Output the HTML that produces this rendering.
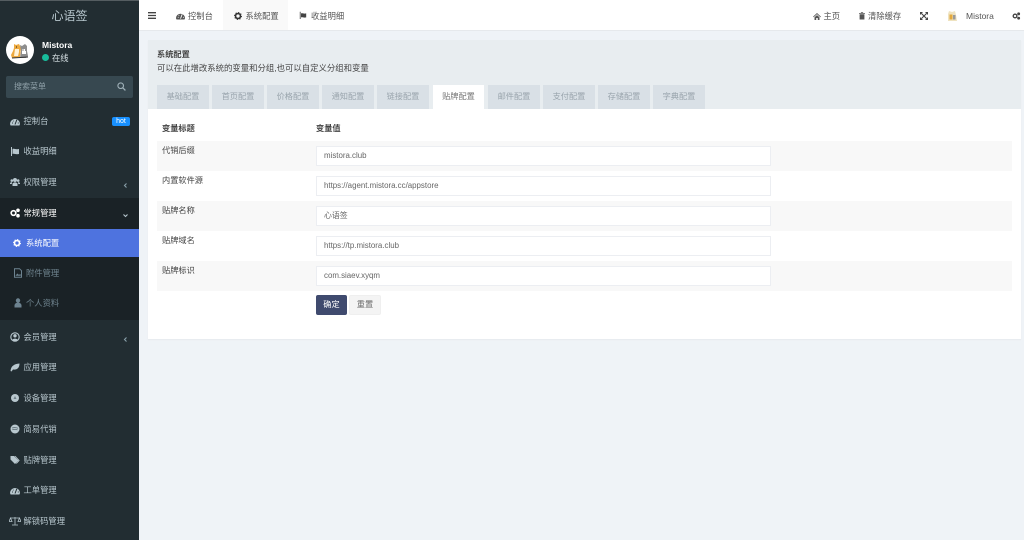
<!DOCTYPE html>
<html lang="zh"><head><meta charset="utf-8"><title>系统配置</title>
<style>
*{box-sizing:border-box}
html,body{margin:0;padding:0;width:1024px;height:540px;overflow:hidden;background:#eff3f7;font-family:"Liberation Sans","Noto Sans CJK SC",sans-serif;font-size:8.2px;color:#444}
#wrap{position:absolute;left:0;top:0;width:1024px;height:540px;overflow:hidden;filter:blur(.3px)}
.a{position:absolute;white-space:nowrap}
#side{position:absolute;left:0;top:0;width:139px;height:540px;background:#222d32}
.mi{position:absolute;left:23.5px;color:#b8c7ce;font-size:8.3px;line-height:12px;white-space:nowrap}
.ic{position:absolute;left:10px;width:10px;height:10px;fill:#b8c7ce}
.ch{position:absolute;left:122px;width:7px;height:7px;fill:none;stroke:#8aa0aa;stroke-width:1.1}
.tab{position:absolute;top:85px;width:52px;height:24px;background:#d9e0e6;color:#9aa5ad;text-align:center;line-height:24px;font-size:8.2px}
.row{position:absolute;left:157px;width:855px;height:30px}
.g{background:#f8f8f8}
.lb{position:absolute;left:162px;font-size:8.2px;line-height:12px;color:#444}
.inp{position:absolute;left:316px;width:455px;height:20px;background:#fff;border:1px solid #eceef2;color:#666;font-size:7.9px;line-height:18px;padding-left:7px;white-space:nowrap}
.top{position:absolute;font-size:8.3px;line-height:12px;color:#555;white-space:nowrap}
svg{display:block;position:absolute}
</style></head><body>
<div id="wrap">

<div id="side"></div>
<div class="a" style="left:0;top:0;width:139px;height:1px;background:#555d61"></div>
<div class="a" style="left:0;width:139px;top:8px;text-align:center;font-size:12px;line-height:16px;color:#b8c7ce">心语签</div>

<svg style="left:6px;top:36px" width="28" height="28" viewBox="0 0 28 28">
<circle cx="14" cy="14" r="14" fill="#fff"/>
<path d="M8 8l2 1 3-1 2 4-1 9-8 1-1-3 2-4 1-3z" fill="#eda93f"/>
<path d="M9 13h4v3l-1 4H8z" fill="#fff3d8"/>
<path d="M14 9l2 1 3-2 2 2 0 5 1 5-2 2-6 0 1-7z" fill="#8e8e8e"/>
<path d="M16 13h4v5h-4z" fill="#fff"/>
<path d="M6 22l16-1" stroke="#333" stroke-width="1"/>
<path d="M10 11h1M16.500 14h1M19 14h1" stroke="#222" stroke-width="1"/>
</svg>
<div class="a" style="left:42px;top:38.500px;color:#fff;font-weight:bold;font-size:8.500px;line-height:12px">Mistora</div>
<div class="a" style="left:42px;top:54px;width:7px;height:7px;border-radius:50%;background:#18bc9c"></div>
<div class="a" style="left:52px;top:52px;color:#d8e2e6;font-size:8.300px;line-height:12px">在线</div>

<div class="a" style="left:6px;top:76px;width:127px;height:22px;background:#374850;border-radius:2px"></div>
<div class="a" style="left:14px;top:81px;color:#8fa0a8;font-size:8px;line-height:12px">搜索菜单</div>
<svg style="left:117px;top:82px" width="9" height="9" viewBox="0 0 9 9"><circle cx="3.700" cy="3.700" r="2.800" fill="none" stroke="#9fb0b8" stroke-width="1.100"/><path d="M5.800 5.800L8.400 8.400" stroke="#9fb0b8" stroke-width="1.300"/></svg>

<div class="a" style="left:0;top:198px;width:139px;height:122px;background:#1a2226"></div>
<div class="a" style="left:0;top:229px;width:139px;height:28px;background:#4e73df"></div>

<svg class="ic" style="top:116px" viewBox="0 0 10 10"><path d="M0 8a5 5 0 0 1 10 0l-.6 1.500H.6z"/><path d="M5 8.500L6.800 3.800M2 7h.9M7.800 7h.9M3 4.800l.5.500" stroke="#222d32" stroke-width="1" fill="none"/></svg>
<div class="mi" style="top:115px">控制台</div>
<div class="a" style="left:112px;top:117px;width:18px;height:9px;background:#1890ff;border-radius:2px;color:#fff;font-size:7px;line-height:9px;text-align:center">hot</div>

<svg class="ic" style="top:146px" viewBox="0 0 10 10"><path d="M1 1h1v9H1zM2.500 3c2-.8 3 .8 6.500 0v5c-3.500.8-4.500-.8-6.500 0z"/></svg>
<div class="mi" style="top:145px">收益明细</div>

<svg class="ic" style="top:177px" viewBox="0 0 10 10"><circle cx="5" cy="3" r="2"/><circle cx="1.800" cy="3.600" r="1.300"/><circle cx="8.200" cy="3.600" r="1.300"/><path d="M2.500 9V6.500Q5 4 7.500 6.500V9zM0 7V6q1-1 2-.8L1.800 7zM10 7V6q-1-1-2-.8L8.200 7z"/></svg>
<div class="mi" style="top:176px">权限管理</div>
<svg class="ch" style="top:182px" viewBox="0 0 7 7"><path d="M4.500 1.500L2.500 3.500L4.500 5.500"/></svg>

<svg class="ic" style="top:208px" viewBox="0 0 10 10"><circle cx="3.500" cy="5" r="2.300" fill="none" stroke="#fff" stroke-width="1.700"/><circle cx="8" cy="2.300" r="1.800" fill="#fff"/><circle cx="8" cy="7.700" r="1.800" fill="#fff"/></svg>
<div class="mi" style="top:207px;color:#fff">常规管理</div>
<svg class="ch" style="top:212px;stroke:#b8c7ce" viewBox="0 0 7 7"><path d="M1.500 2.500L3.500 4.500L5.500 2.500"/></svg>

<svg class="ic" style="left:13px;top:238.500px;width:8px;height:8px" viewBox="0 0 10 10"><circle cx="5" cy="5" r="3.100" fill="none" stroke="#fff" stroke-width="2"/><circle cx="5" cy="5" r="4.400" fill="none" stroke="#fff" stroke-width="1.200" stroke-dasharray="1.500 1.955"/></svg>
<div class="mi" style="left:26px;top:237px;color:#fff">系统配置</div>

<svg class="ic" style="left:13px;top:268px;fill:none;stroke:#6d8390" viewBox="0 0 10 10"><path d="M1.500 .7h5l2 2v6.600h-7z"/><path d="M2.500 7.500l2-2 1.500 1.500 1-1 .8.800v1h-5z" fill="#6d8390" stroke="none"/></svg>
<div class="mi" style="left:26px;top:267px;color:#6f848f">附件管理</div>

<svg class="ic" style="left:13px;top:298px;fill:#6d8390" viewBox="0 0 10 10"><circle cx="5" cy="2.500" r="2.200"/><path d="M1.500 9.500V7q1-2.500 3.500-2.500T8.500 7v2.500z"/></svg>
<div class="mi" style="left:26px;top:297px;color:#6f848f">个人资料</div>

<svg class="ic" style="top:332px" viewBox="0 0 10 10"><circle cx="5" cy="5" r="4.200" fill="none" stroke="#b8c7ce" stroke-width="1.100"/><circle cx="5" cy="3.800" r="1.700"/><path d="M2.300 8a3 2.500 0 0 1 5.400 0L5 9.500z"/></svg>
<div class="mi" style="top:331px">会员管理</div>
<svg class="ch" style="top:336px" viewBox="0 0 7 7"><path d="M4.500 1.500L2.500 3.500L4.500 5.500"/></svg>

<svg class="ic" style="top:362px" viewBox="0 0 10 10"><path d="M.5 9C1 4 4 2 9.500 1.500 9.500 6 7 8 3 7.500L1.500 9.500z"/></svg>
<div class="mi" style="top:361px">应用管理</div>

<svg class="ic" style="top:393px" viewBox="0 0 10 10"><circle cx="5" cy="5" r="4"/><path d="M5 3l1.500 3h-3z" fill="#6f7f87"/></svg>
<div class="mi" style="top:392px">设备管理</div>

<svg class="ic" style="top:424px" viewBox="0 0 10 10"><circle cx="5" cy="5" r="4.500"/><path d="M2 4q3-1 6 .3M2.300 5.700q2.700-.8 5.200.2" stroke="#5a6a72" stroke-width=".8" fill="none"/></svg>
<div class="mi" style="top:423px">简易代销</div>

<svg class="ic" style="top:455px" viewBox="0 0 10 10"><path d="M.5 1h3.500l4.500 4.500-3.500 3.500L.5 4.500z"/><path d="M5.500 1l4.200 4.500-3 3.300-.7-.6 2.500-2.700L4.500 1z"/></svg>
<div class="mi" style="top:454px">贴牌管理</div>

<svg class="ic" style="top:485px" viewBox="0 0 10 10"><path d="M0 8a5 5 0 0 1 10 0l-.6 1.500H.6z"/><path d="M5 8.500L6.800 3.800M2 7h.9M7.800 7h.9M3 4.800l.5.500" stroke="#222d32" stroke-width="1" fill="none"/></svg>
<div class="mi" style="top:484px">工单管理</div>

<svg class="ic" style="top:516px;width:12px;left:9px;fill:none;stroke:#b8c7ce;stroke-width:.8" viewBox="0 0 12 10"><path d="M6 1v7.500M3 9h6M1.500 2h9M1.500 2L0 5.500h3zM10.500 2L9 5.500h3z"/></svg>
<div class="mi" style="top:515px">解锁码管理</div>

<!-- header -->
<div class="a" style="left:139px;top:0;width:885px;height:31px;background:#fff;border-bottom:1px solid #e6e9ec"></div>
<div class="a" style="left:223px;top:0;width:65px;height:30px;background:#f9f9f9"></div>
<svg style="left:148px;top:12px" width="8" height="7" viewBox="0 0 8 7"><path d="M0 .7h8M0 3.500h8M0 6.300h8" stroke="#444" stroke-width="1.300"/></svg>

<svg style="left:176px;top:11px;fill:#555" width="9" height="9" viewBox="0 0 10 10"><path d="M0 8a5 5 0 0 1 10 0l-.6 1.500H.6z"/><path d="M5 8.500L6.800 3.800M2 7h.9M7.800 7h.9M3 4.800l.5.500" stroke="#fff" stroke-width="1" fill="none"/></svg>
<div class="top" style="left:188px;top:9.500px">控制台</div>
<svg style="left:234px;top:11.500px" width="8" height="8" viewBox="0 0 10 10"><circle cx="5" cy="5" r="3.100" fill="none" stroke="#333" stroke-width="2"/><circle cx="5" cy="5" r="4.400" fill="none" stroke="#333" stroke-width="1.200" stroke-dasharray="1.500 1.955"/></svg>
<div class="top" style="left:245.500px;top:9.500px">系统配置</div>
<svg style="left:299px;top:11px;fill:#444" width="8" height="8" viewBox="0 0 10 10"><path d="M1 1h1v9H1zM2.500 3c2-.8 3 .8 6.500 0v5c-3.500.8-4.500-.8-6.500 0z"/></svg>
<div class="top" style="left:311px;top:9.500px">收益明细</div>

<svg style="left:813px;top:12.500px;fill:#555" width="8" height="7" viewBox="0 0 10 9"><path d="M5 0L0 4.600l.7.800L5 1.500l4.300 3.900.7-.8zM1.800 5.500L5 2.700l3.200 2.800V9H6V6.500H4V9H1.800z"/></svg>
<div class="top" style="left:823.500px;top:9.500px">主页</div>
<svg style="left:858.500px;top:12px;fill:#555" width="6" height="7.500" viewBox="0 0 8 10"><path d="M0 1.500h8v1H0zM2.500.3h3v1h-3zM.8 3h6.400v7H.8z"/></svg>
<div class="top" style="left:868px;top:9.500px">清除缓存</div>
<svg style="left:920px;top:11.500px;fill:#444" width="8" height="8" viewBox="0 0 8 8"><path d="M0 0h3L0 3zM8 0v3L5 0zM0 8V5l3 3zM8 8H5l3-3z"/><path d="M1.500 1.500l5 5M6.500 1.500l-5 5" stroke="#444" stroke-width="1.100"/></svg>
<svg style="left:947px;top:10px" width="11" height="12" viewBox="0 0 11 12"><path d="M1 4l1-3 3 1 3-1 1 4 1 6H1z" fill="#efe3c0"/><path d="M2.500 4.500h3v5h-3z" fill="#e3a93d"/><path d="M6 5h2.500v4.500H6z" fill="#9a9a9a"/></svg>
<div class="top" style="left:966px;top:9.500px;font-size:8.500px">Mistora</div>
<svg style="left:1012px;top:11.500px;fill:#444" width="8.500" height="8" viewBox="0 0 10 10"><circle cx="3.500" cy="5" r="2.300" fill="none" stroke="#444" stroke-width="1.700"/><circle cx="8" cy="2.300" r="1.800"/><circle cx="8" cy="7.700" r="1.800"/></svg>

<!-- panel -->
<div class="a" style="left:148px;top:40px;width:873px;height:299px;background:#fff;box-shadow:0 1px 1px #e6eaee"></div>
<div class="a" style="left:148px;top:40px;width:873px;height:69px;background:#e8edf0"></div>
<div class="a" style="left:157px;top:49px;font-size:8.200px;font-weight:bold;line-height:12px;color:#444">系统配置</div>
<div class="a" style="left:157px;top:62px;font-size:8.400px;line-height:12px;color:#444">可以在此增改系统的变量和分组,也可以自定义分组和变量</div>

<div class="tab" style="left:157px">基础配置</div>
<div class="tab" style="left:212px">首页配置</div>
<div class="tab" style="left:267px">价格配置</div>
<div class="tab" style="left:322px">通知配置</div>
<div class="tab" style="left:377px">链接配置</div>
<div class="tab" style="left:433px;width:51px;background:#fff;color:#777">贴牌配置</div>
<div class="tab" style="left:488px">邮件配置</div>
<div class="tab" style="left:543px">支付配置</div>
<div class="tab" style="left:598px">存储配置</div>
<div class="tab" style="left:653px">字典配置</div>

<div class="lb" style="top:123px;font-weight:bold">变量标题</div>
<div class="lb" style="left:316px;top:123px;font-weight:bold">变量值</div>

<div class="row g" style="top:141px"></div>
<div class="row" style="top:171px"></div>
<div class="row g" style="top:201px"></div>
<div class="row" style="top:231px"></div>
<div class="row g" style="top:261px"></div>

<div class="lb" style="top:145px">代销后缀</div>
<div class="lb" style="top:175px">内置软件源</div>
<div class="lb" style="top:205px">贴牌名称</div>
<div class="lb" style="top:235px">贴牌域名</div>
<div class="lb" style="top:265px">贴牌标识</div>

<div class="inp" style="top:146px">mistora.club</div>
<div class="inp" style="top:176px">https://agent.mistora.cc/appstore</div>
<div class="inp" style="top:206px">心语签</div>
<div class="inp" style="top:236px">https://tp.mistora.club</div>
<div class="inp" style="top:266px">com.siaev.xyqm</div>

<div class="a" style="left:316px;top:295px;width:31px;height:20px;background:#3f4a6e;border-radius:2px;color:#fff;text-align:center;line-height:20px;font-size:8.200px">确定</div>
<div class="a" style="left:349px;top:295px;width:32px;height:20px;background:#f4f4f4;border:1px solid #efefef;border-radius:2px;color:#666;text-align:center;line-height:18px;font-size:8.200px">重置</div>

</div>
</body></html>
